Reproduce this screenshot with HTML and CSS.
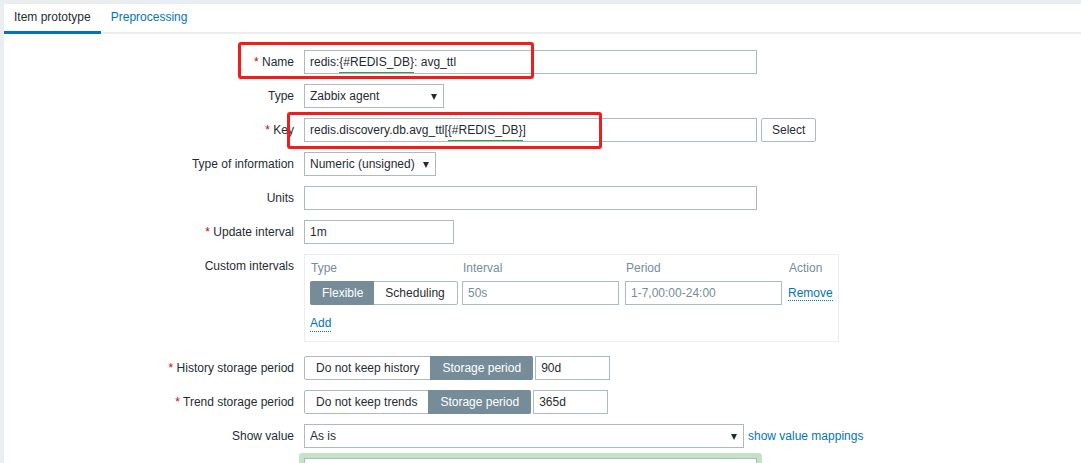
FILE: index.html
```html
<!DOCTYPE html>
<html lang="en">

<head>
    <meta charset="UTF-8">
    <title>Item prototype</title>
    <link rel="stylesheet" href="styles.css">
</head>

<body>
    <div class="page">
        <ul class="tabs">
            <li class="tab active">Item prototype</li>
            <li class="tab"><a href="#">Preprocessing</a></li>
        </ul>

        <div class="form">
            <label class="lbl"><span class="req">*</span> Name</label>
            <div class="field wide"><span>redis:</span><span class="macro">{#REDIS_DB}</span><span>: avg_ttl</span></div>

            <label class="lbl">Type</label>
            <div class="select w-type">Zabbix agent<span class="arrow"></span></div>

            <label class="lbl"><span class="req">*</span> Key</label>
            <div class="inline">
                <div class="field wide"><span>redis.discovery.db.avg_ttl[</span><span class="macro">{#REDIS_DB}</span><span>]</span></div>
                <button class="btn">Select</button>
            </div>

            <label class="lbl">Type of information</label>
            <div class="select w-info">Numeric (unsigned)<span class="arrow"></span></div>

            <label class="lbl">Units</label>
            <input class="input wide" type="text" value="">

            <label class="lbl"><span class="req">*</span> Update interval</label>
            <input class="input w-short" type="text" value="1m">

            <label class="lbl">Custom intervals</label>
            <div class="intervals">
                <div class="iv-grid">
                    <div class="iv-head">Type</div>
                    <div class="iv-head">Interval</div>
                    <div class="iv-head">Period</div>
                    <div class="iv-head">Action</div>

                    <div class="segmented">
                        <span class="seg on">Flexible</span><span class="seg">Scheduling</span>
                    </div>
                    <input class="input iv-input" type="text" placeholder="50s">
                    <input class="input iv-input" type="text" placeholder="1-7,00:00-24:00">
                    <a class="link dotted" href="#">Remove</a>
                </div>
                <a class="link dotted add" href="#">Add</a>
            </div>

            <label class="lbl"><span class="req">*</span> History storage period</label>
            <div class="inline">
                <div class="segmented">
                    <span class="seg">Do not keep history</span><span class="seg on">Storage period</span>
                </div>
                <input class="input w-days" type="text" value="90d">
            </div>

            <label class="lbl"><span class="req">*</span> Trend storage period</label>
            <div class="inline">
                <div class="segmented">
                    <span class="seg">Do not keep trends</span><span class="seg on">Storage period</span>
                </div>
                <input class="input w-days" type="text" value="365d">
            </div>

            <label class="lbl">Show value</label>
            <div class="inline">
                <div class="select w-show">As is<span class="arrow"></span></div>
                <a class="link" href="#">show value mappings</a>
            </div>

            <label class="lbl"></label>
            <div class="highlight">
                <div class="textarea"></div>
            </div>
        </div>

        <!-- annotation frames drawn over the screenshot -->
        <div class="mark mark-name"></div>
        <div class="mark mark-key"></div>
    </div>
</body>

</html>
```

FILE: styles.css
```css
body {
    margin: 0;
    background-color: #ebeef0;
    font-family: "Liberation Sans", Arial, sans-serif;
    font-size: 12px;
    color: #1f2c33;
}

.page {
    position: relative;
    margin: 4px 0 0 4px;
    height: 459px;
    background-color: #fff;
    overflow: hidden;
}

/* Tabs */
.tabs {
    display: flex;
    list-style: none;
    margin: 0;
    padding: 0;
    height: 28px;
    border-bottom: 2px solid #ebeef0;
}

.tab {
    padding: 0 10px;
    line-height: 27px;
    height: 27px;
    border-bottom: 3px solid transparent;
}

.tab.active {
    border-bottom-color: #0275b8;
}

.tab a,
.link {
    color: #0275b8;
    text-decoration: none;
}

/* Form grid */
.form {
    display: grid;
    grid-template-columns: 290px 1fr;
    column-gap: 10px;
    row-gap: 10px;
    padding-top: 16px;
}

.lbl {
    text-align: right;
    line-height: 24px;
    white-space: nowrap;
}

.req {
    color: #d40000;
}

.inline {
    display: flex;
    align-items: center;
    gap: 4px;
}

.field,
.input,
.select,
.textarea {
    box-sizing: border-box;
    height: 24px;
    border: 1px solid #acbbc2;
    background-color: #fff;
    font-family: inherit;
    font-size: 12px;
    color: #1f2c33;
    padding: 0 5px;
    line-height: 22px;
    white-space: nowrap;
}

.input::placeholder {
    color: #768d99;
}

.wide {
    width: 453px;
}

.w-short {
    width: 150px;
}

.w-days {
    width: 75px;
}

.macro {
    border-bottom: 1px solid #34a234;
    padding-bottom: 3px;
}

.select {
    position: relative;
    padding-right: 20px;
}

.w-type {
    width: 140px;
}

.w-info {
    width: 132px;
}

.w-show {
    width: 440px;
}

.arrow {
    position: absolute;
    right: 6px;
    top: 9px;
    border-left: 3.5px solid transparent;
    border-right: 3.5px solid transparent;
    border-top: 6px solid #1f2c33;
}

.btn {
    box-sizing: border-box;
    height: 24px;
    padding: 0 10px;
    border: 1px solid #acbbc2;
    border-radius: 2px;
    background-color: #fff;
    font-family: inherit;
    font-size: 12px;
    color: #1f2c33;
}

/* Segmented radio buttons */
.segmented {
    display: flex;
    height: 24px;
    box-sizing: border-box;
    border: 1px solid #acbbc2;
    border-radius: 2px;
}

.seg {
    padding: 0 11px;
    line-height: 22px;
    white-space: nowrap;
}

.seg.on {
    background-color: #768d99;
    color: #fff;
    margin: -1px -1px -1px 0;
    padding: 0 12px;
    line-height: 24px;
    border-radius: 0 2px 2px 0;
}

.segmented .seg.on:first-child {
    margin: -1px 0 -1px -1px;
    padding: 0 11px 0 12px;
    border-radius: 2px 0 0 2px;
}

.inline .segmented {
    margin-right: -2px;
}

/* Custom intervals table */
.intervals {
    width: 535px;
    box-sizing: border-box;
    border: 1px solid #ebeef0;
    padding: 4px 5px 9px 5px;
    margin-bottom: 4px;
}

.iv-grid {
    display: grid;
    grid-template-columns: 152px 163px 163px auto;
    align-items: center;
}

.iv-head {
    color: #768d99;
    line-height: 18px;
    margin-bottom: 4px;
    padding-left: 1px;
}

.iv-grid .segmented {
    width: 148px;
}

.iv-input {
    width: 157px;
}

.dotted {
    border-bottom: 1px dotted #0275b8;
}

.add {
    display: inline-block;
    margin-top: 11px;
    line-height: 15px;
}

/* Highlighted description box */
.highlight {
    margin: -5px 0 0 -5px;
    padding: 5px;
    width: 453px;
    background-color: #c5e2c6;
    border-radius: 3px;
}

.textarea {
    width: 453px;
    height: 60px;
}

/* Red annotation frames */
.mark {
    position: absolute;
    border: 3px solid #f01d1d;
    border-radius: 3px;
    box-sizing: border-box;
}

.mark-name {
    left: 234px;
    top: 38px;
    width: 296px;
    height: 37px;
}

.mark-key {
    left: 283px;
    top: 108px;
    width: 315px;
    height: 37px;
}
```
